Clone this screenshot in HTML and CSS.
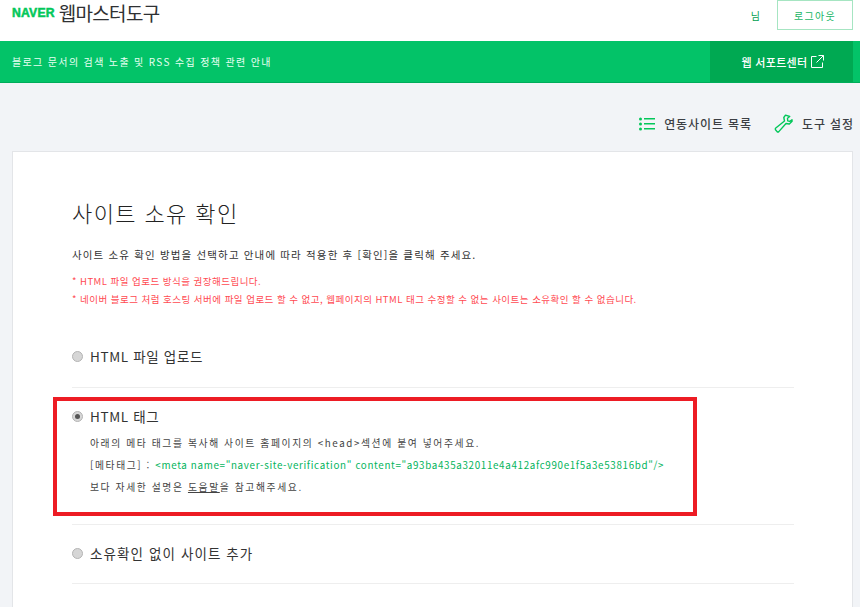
FILE: index.html
```html
<!DOCTYPE html>
<html lang="ko">
<head>
<meta charset="utf-8">
<title>네이버 웹마스터도구</title>
<link rel="stylesheet" href="styles.css">
</head>
<body>
<header class="top">
  <div class="brand"><span class="naver">NAVER</span><span class="product">웹마스터도구</span></div>
  <div class="account"><span class="user">님</span><a class="logout">로그아웃</a></div>
</header>
<div class="band">
  <span class="notice">블로그 문서의 검색 노출 및 RSS 수집 정책 관련 안내</span>
  <a class="support">웹 서포트센터
    <svg class="ext" width="13" height="13" viewBox="0 0 13 13" fill="none" stroke="#fff" stroke-width="1"><path d="M5.5 1.5H.5v11h11v-5"/><path d="M7.5.5h5v5M12.5.5 5.500 7.500"/></svg>
  </a>
</div>
<nav class="tools">
  <a class="tool">
    <svg width="16" height="14" viewBox="0 0 16 14" fill="#03c75a"><circle cx="1.500" cy="2" r="1.500"/><circle cx="1.500" cy="7" r="1.500"/><circle cx="1.500" cy="12" r="1.500"/><rect x="5" y="1" width="11" height="1.500"/><rect x="5" y="6" width="11" height="1.500"/><rect x="5" y="11" width="11" height="1.500"/></svg>
    연동사이트 목록</a>
  <a class="tool">
    <svg width="19" height="19" viewBox="0 0 19 19" fill="none" stroke="#03c75a" stroke-width="1.400" stroke-linejoin="round"><path d="M11.500 1.200 9.800 3.500 10.500 7 1.500 14.300a1.800 1.800 0 0 0 0 1.500l1.600 1.800a1.300 1.300 0 0 0 1.700 0L12 9.500l3.300.5 2.800-2.800-.1-1.400-2.300 1.600-2-.6-.2-2.600L15.700 2.500z"/></svg>
    도구 설정</a>
</nav>
<main class="card">
  <h1 class="title">사이트 소유 확인</h1>
  <p class="lead">사이트 소유 확인 방법을 선택하고 안내에 따라 적용한 후 [확인]을 클릭해 주세요.</p>
  <p class="warn first">* HTML 파일 업로드 방식을 권장해드립니다.</p>
  <p class="warn">* 네이버 블로그 처럼 호스팅 서버에 파일 업로드 할 수 없고, 웹페이지의 HTML 태그 수정할 수 없는 사이트는 소유확인 할 수 없습니다.</p>
  <section class="option">
    <label class="opt-label"><span class="radio"></span>HTML 파일 업로드</label>
  </section>
  <section class="option open">
    <label class="opt-label"><span class="radio on"></span>HTML 태그</label>
    <div class="detail">
      <p>아래의 메타 태그를 복사해 사이트 홈페이지의 &lt;head&gt;섹션에 붙여 넣어주세요.</p>
      <p>[메타태그] : <span class="meta">&lt;meta name="naver-site-verification" content="a93ba435a32011e4a412afc990e1f5a3e53816bd"/&gt;</span></p>
      <p>보다 자세한 설명은 <u>도움말</u>을 참고해주세요.</p>
    </div>
  </section>
  <section class="option last">
    <label class="opt-label wide"><span class="radio"></span>소유확인 없이 사이트 추가</label>
  </section>
</main>
<div class="highlight"></div>
</body>
</html>
```
FILE: styles.css
```css
* { box-sizing: border-box; }
html, body { margin: 0; height: 607px; overflow: hidden; }
body {
  position: relative;
  background: #f2f4f7;
  font-family: "Noto Sans CJK KR", "Liberation Sans", sans-serif;
  color: #333;
}
p { margin: 0; }
.top {
  height: 41px;
  background: #fff;
  display: flex;
  justify-content: space-between;
  padding: 0 7px 0 12px;
}
.brand { display: flex; align-items: center; height: 26px; }
.naver {
  font-family: "Liberation Sans", sans-serif;
  font-weight: 700;
  font-size: 12.200px;
  letter-spacing: 0.200px;
  color: #03c75a;
  -webkit-text-stroke: 0.500px #03c75a;
  margin-right: 4px;
}
.product { font-size: 19px; letter-spacing: -0.700px; color: #2f3133; line-height: 26px; }
.account { display: flex; align-items: flex-start; }
.user { font-size: 10px; color: #009e4f; margin-top: 8px; margin-right: 17px; }
.logout {
  width: 76px;
  height: 30px;
  border: 1px solid #a6e5c2;
  color: #17b565;
  font-size: 10px;
  letter-spacing: 1.300px;
  display: flex;
  align-items: center;
  justify-content: center;
}
.band {
  height: 42px;
  background: #03c368;
  border-bottom: 1px solid #00ad5a;
  display: flex;
  justify-content: space-between;
  padding-left: 12px;
  padding-right: 7px;
}
.notice { color: #e8fff2; font-size: 10px; letter-spacing: 1.350px; line-height: 41px; }
.support {
  width: 143px;
  padding-left: 3px;
  background: #00a952;
  color: #fff;
  font-size: 11px;
  font-weight: 500;
  letter-spacing: 0.300px;
  display: flex;
  align-items: center;
  justify-content: center;
  gap: 4px;
}
.tools {
  height: 68px;
  display: flex;
  justify-content: flex-end;
  align-items: center;
  gap: 22px;
  padding-right: 6px;
  padding-top: 13px;
}
.tool { display: flex; align-items: center; gap: 9px; font-size: 12px; font-weight: 500; color: #3c3f44; letter-spacing: 0.900px; }
.card {
  margin: 0 7px 0 12px;
  background: #fff;
  border: 1px solid #e3e5e8;
  border-bottom: 0;
  height: 456px;
  padding: 44px 59px 0;
}
.title { margin: 0; font-size: 22px; font-weight: 300; line-height: 32px; color: #222; letter-spacing: 1.400px; }
.lead { font-size: 10.500px; letter-spacing: 1.150px; margin-top: 19px; line-height: 16px; color: #333; }
.warn { font-size: 9.500px; color: #ff4a52; letter-spacing: 0.470px; line-height: 14px; margin-top: 4px; }
.warn.first { margin-top: 11px; }
.option {
  border-bottom: 1px solid #eeeeee;
  width: 722px;
}
.option:first-of-type { margin-top: 40px; padding-bottom: 21px; }
.opt-label { display: flex; align-items: center; font-size: 13.500px; line-height: 20px; color: #333; letter-spacing: 0.650px; }
.opt-label.wide { letter-spacing: 1.100px; }
.radio {
  flex: none;
  width: 11px;
  height: 11px;
  border-radius: 50%;
  background: #d6d6d6;
  border: 1px solid #b4b4b4;
  margin-right: 7px;
  display: flex;
  align-items: center;
  justify-content: center;
}
.radio.on::after { content: ""; width: 5px; height: 5px; border-radius: 50%; background: #555; }
.option.open { padding-top: 18px; padding-bottom: 26px; }
.detail { padding-left: 18px; margin-top: 6px; font-size: 9.800px; letter-spacing: 1.600px; color: #444; }
.detail p { line-height: 22px; }
.meta { color: #03b45c; letter-spacing: 0.670px; }
.option.last { padding-top: 18px; padding-bottom: 20px; }
.highlight {
  position: absolute;
  left: 53px;
  top: 397px;
  width: 644px;
  height: 119px;
  border: 4px solid #ed1c24;
}
```
